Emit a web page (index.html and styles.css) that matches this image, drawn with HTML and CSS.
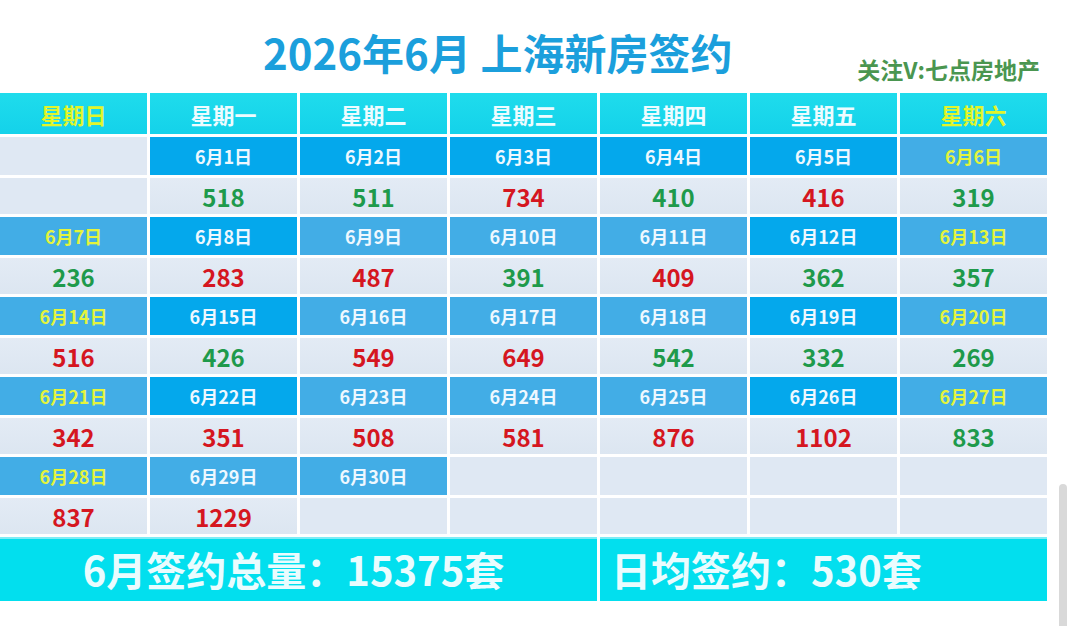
FILE: index.html
```html
<!DOCTYPE html>
<html lang="zh-CN">
<head>
<meta charset="utf-8">
<title>2026年6月 上海新房签约</title>
<link rel="stylesheet" href="styles.css">
</head>
<body>
<div class="page">
  <header class="top">
    <h1 class="title">2026年6月 上海新房签约</h1>
    <div class="credit">关注V:七点房地产</div>
  </header>

  <div class="cal">
    <div class="wk we">星期日</div>
    <div class="wk">星期一</div>
    <div class="wk">星期二</div>
    <div class="wk">星期三</div>
    <div class="wk">星期四</div>
    <div class="wk">星期五</div>
    <div class="wk we">星期六</div>

    <div class="empty"></div>
    <div class="d v">6月1日</div>
    <div class="d v">6月2日</div>
    <div class="d v">6月3日</div>
    <div class="d v">6月4日</div>
    <div class="d v">6月5日</div>
    <div class="d we">6月6日</div>
    <div class="empty"></div>
    <div class="n g">518</div>
    <div class="n g">511</div>
    <div class="n r">734</div>
    <div class="n g">410</div>
    <div class="n r">416</div>
    <div class="n g">319</div>

    <div class="d we">6月7日</div>
    <div class="d v">6月8日</div>
    <div class="d">6月9日</div>
    <div class="d">6月10日</div>
    <div class="d">6月11日</div>
    <div class="d v">6月12日</div>
    <div class="d we">6月13日</div>
    <div class="n g">236</div>
    <div class="n r">283</div>
    <div class="n r">487</div>
    <div class="n g">391</div>
    <div class="n r">409</div>
    <div class="n g">362</div>
    <div class="n g">357</div>

    <div class="d we">6月14日</div>
    <div class="d v">6月15日</div>
    <div class="d">6月16日</div>
    <div class="d">6月17日</div>
    <div class="d">6月18日</div>
    <div class="d v">6月19日</div>
    <div class="d we">6月20日</div>
    <div class="n r">516</div>
    <div class="n g">426</div>
    <div class="n r">549</div>
    <div class="n r">649</div>
    <div class="n g">542</div>
    <div class="n g">332</div>
    <div class="n g">269</div>

    <div class="d we">6月21日</div>
    <div class="d v">6月22日</div>
    <div class="d">6月23日</div>
    <div class="d">6月24日</div>
    <div class="d">6月25日</div>
    <div class="d v">6月26日</div>
    <div class="d we">6月27日</div>
    <div class="n r">342</div>
    <div class="n r">351</div>
    <div class="n r">508</div>
    <div class="n r">581</div>
    <div class="n r">876</div>
    <div class="n r">1102</div>
    <div class="n g">833</div>

    <div class="d we">6月28日</div>
    <div class="d">6月29日</div>
    <div class="d">6月30日</div>
    <div class="empty"></div>
    <div class="empty"></div>
    <div class="empty"></div>
    <div class="empty"></div>
    <div class="n r">837</div>
    <div class="n r">1229</div>
    <div class="empty"></div>
    <div class="empty"></div>
    <div class="empty"></div>
    <div class="empty"></div>
    <div class="empty"></div>

    <div class="sum total">6月签约总量：15375套</div>
    <div class="sum avg">日均签约：530套</div>
  </div>

  <div class="scrollbar"></div>
</div>
</body>
</html>
```

FILE: styles.css
```css
html, body {
  margin: 0;
  padding: 0;
  background: #ffffff;
}

body {
  font-family: "Noto Sans CJK SC", "Noto Sans", sans-serif;
  width: 1080px;
  height: 626px;
  overflow: hidden;
}

.page {
  position: relative;
  width: 1080px;
  height: 626px;
}

.top {
  display: flex;
  height: 93px;
}

.title {
  margin: 0 0 0 263px;
  padding-top: 31px;
  font-size: 42px;
  line-height: 1;
  font-weight: 700;
  color: #1b9fdc;
  letter-spacing: 0;
  white-space: nowrap;
}

.credit {
  margin-left: auto;
  margin-right: 40px;
  align-self: flex-end;
  margin-bottom: 12px;
  font-size: 23px;
  line-height: 1;
  font-weight: 700;
  color: #4a9650;
  white-space: nowrap;
}

.cal {
  display: grid;
  width: 1047px;
  grid-template-columns: repeat(7, 147px);
  grid-template-rows: 41px repeat(5, 38px 36px) 64px;
  gap: 3px;
}

.cal > div {
  display: flex;
  align-items: center;
  justify-content: center;
  font-weight: 700;
  white-space: nowrap;
}

.wk {
  background: linear-gradient(180deg, #1fdcec 0%, #14d2ea 100%);
  color: #eefcff;
  font-size: 22px;
}

.wk.we {
  color: #e2f52a;
}

.d {
  background: #42ade6;
  color: #eef8ff;
  font-size: 18px;
}

.d.v {
  background: #04a8ec;
}

.d.we {
  color: #e4f43c;
}

.empty {
  background: #dfe8f3;
}

.n {
  background: linear-gradient(180deg, #e3ebf5 0%, #dce6f1 100%);
  font-size: 24px;
}

.n.g {
  color: #1e9a4b;
}

.n.r {
  color: #d5161f;
}

.sum {
  background: #02dfee;
  box-shadow: inset 0 2px 0 #7eecf5;
  color: #eafcfe;
  font-size: 40px;
}

.cal > .total {
  grid-column: 1 / span 4;
  padding-right: 10px;
}

.cal > .avg {
  grid-column: 5 / span 3;
  justify-content: flex-start;
  padding-left: 11px;
}

.scrollbar {
  position: absolute;
  left: 1059px;
  top: 484px;
  width: 8px;
  height: 150px;
  background: #d9d9d9;
  border-radius: 4px;
}
```
